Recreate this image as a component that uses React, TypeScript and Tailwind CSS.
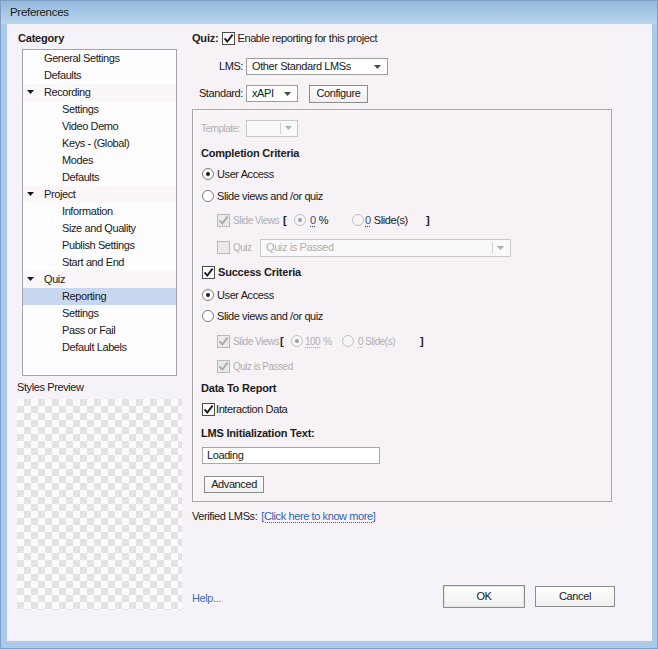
import clsx from "clsx";

type Node = { t: string; l: number; arrow?: boolean; sel?: boolean };

const tree: Node[] = [
  { t: "General Settings", l: 0 },
  { t: "Defaults", l: 0 },
  { t: "Recording", l: 0, arrow: true },
  { t: "Settings", l: 1 },
  { t: "Video Demo", l: 1 },
  { t: "Keys - (Global)", l: 1 },
  { t: "Modes", l: 1 },
  { t: "Defaults", l: 1 },
  { t: "Project", l: 0, arrow: true },
  { t: "Information", l: 1 },
  { t: "Size and Quality", l: 1 },
  { t: "Publish Settings", l: 1 },
  { t: "Start and End", l: 1 },
  { t: "Quiz", l: 0, arrow: true },
  { t: "Reporting", l: 1, sel: true },
  { t: "Settings", l: 1 },
  { t: "Pass or Fail", l: 1 },
  { t: "Default Labels", l: 1 },
];

function Check({ checked, disabled }: { checked?: boolean; disabled?: boolean }) {
  return (
    <span
      className={clsx(
        "w-[13px] h-[13px] shrink-0 border flex items-center justify-center",
        disabled ? "border-[#b9b9b9] bg-[#e9e9ea]" : "border-[#4d4d4d] bg-white"
      )}
    >
      {checked && (
        <svg width="11" height="11" viewBox="0 0 11 11">
          <path
            d="M1.6 5.4 L4.3 8.6 L9.6 1.6"
            fill="none"
            stroke={disabled ? "#a9a9a9" : "#1c1c1c"}
            strokeWidth="1.9"
          />
        </svg>
      )}
    </span>
  );
}

function Radio({ on, disabled }: { on?: boolean; disabled?: boolean }) {
  return (
    <span
      className={clsx(
        "w-[12px] h-[12px] shrink-0 rounded-full border flex items-center justify-center",
        disabled ? "border-[#c2c2c2] bg-[#f6f6f6]" : "border-[#7c7c7c] bg-white"
      )}
    >
      {on && (
        <span className={clsx("w-[4px] h-[4px] rounded-full", disabled ? "bg-[#9c9c9c]" : "bg-[#1e1e1e]")} />
      )}
    </span>
  );
}

function Arrow({ color = "#4a4a4a" }: { color?: string }) {
  return (
    <svg width="7" height="4" viewBox="0 0 7 4">
      <polygon points="0,0 7,0 3.5,4" fill={color} />
    </svg>
  );
}

function Select({ text, className, disabled }: { text: string; className: string; disabled?: boolean }) {
  return (
    <div
      className={clsx(
        "h-[17px] border flex items-center pl-[5px] pr-[6px]",
        disabled ? "border-[#c9c9c9] bg-[#f9f8fa] text-[#b0b0b0]" : "border-[#9d9d9d] bg-white",
        className
      )}
    >
      <span className="flex-1 truncate">{text}</span>
      {disabled && <span className="w-px h-[11px] bg-[#d0d0d0] mr-[4px]" />}
      <Arrow color={disabled ? "#a9a9a9" : "#4a4a4a"} />
    </div>
  );
}

function Btn({ children, className }: { children: string; className: string }) {
  return (
    <div
      className={clsx(
        "border border-[#8c8c8c] bg-linear-to-b from-[#fdfdfd] to-[#f0f0f0] flex items-center justify-center",
        className
      )}
    >
      {children}
    </div>
  );
}

export default function App() {
  return (
    <div className="w-[658px] h-[649px] flex flex-col bg-[#abc9e8] border border-[#7d9fc4] font-['Liberation_Sans',Arial,sans-serif] text-[11px] tracking-[-0.4px] text-[#202020] whitespace-nowrap overflow-hidden">
      <div className="h-[23px] shrink-0 flex items-center pl-[9px] bg-linear-to-b from-[#93b8dc] to-[#bad5ee] text-[11.5px] tracking-[-0.3px] text-[#1b1b1b]">
        Preferences
      </div>

      <div className="flex-1 ml-[6px] mr-[5px] mb-[7px] border border-[#eef2f8] bg-[#f6f2fa] flex pl-[9px]">
        {/* left column */}
        <div className="w-[165px] shrink-0 flex flex-col">
          <div className="mt-[5px] h-[16px] pl-[1px] flex items-center font-bold tracking-[-0.2px]">Category</div>
          <div className="mt-[3px] ml-[5px] w-[155px] h-[327px] border border-[#a3a3a8] bg-[#fdfcfe]">
            {tree.map((n, i) => (
              <div
                key={i}
                className={clsx(
                  "h-[17px] flex items-center pl-[4px] pb-[1px]",
                  n.sel && "bg-[#c6d7ef]",
                  n.arrow && "bg-[#fbf6f7]"
                )}
              >
                <span className="w-[17px] flex items-center">{n.arrow && <Arrow color="#1a1a1a" />}</span>
                <span className={clsx(n.l === 1 && "ml-[18px]")}>{n.t}</span>
              </div>
            ))}
          </div>
          <div className="mt-[3px] h-[16px] flex items-center">Styles Preview</div>
          <div className="mt-[4px] h-[211px] w-[165px] bg-[conic-gradient(#e3e3e3_25%,#fbfbfb_0_50%,#e3e3e3_0_75%,#fbfbfb_0)] bg-[length:14px_14px]" />
        </div>

        {/* right column */}
        <div className="ml-[4px] flex flex-col">
          <div className="mt-[6px] w-[432px] bg-[#f7f2f6] px-[6px] pb-[5px] flex flex-col">
            <div className="h-[14px] flex items-center">
              <span className="font-bold tracking-[-0.2px] mr-[3px]">Quiz:</span>
              <Check checked />
              <span className="ml-[3px]">Enable reporting for this project</span>
            </div>

            <div className="mt-[13px] h-[17px] flex items-center">
              <span className="w-[54px] pr-[3px] text-right">LMS:</span>
              <Select text="Other Standard LMSs" className="w-[142px]" />
            </div>

            <div className="mt-[10px] h-[17px] flex items-center">
              <span className="w-[54px] pr-[3px] text-right">Standard:</span>
              <Select text="xAPI" className="w-[52px]" />
              <Btn className="ml-[11px] w-[59px] h-[18px]">Configure</Btn>
            </div>

            {/* group box */}
            <div className="mt-[7px] w-[420px] h-[393px] border border-[#a8a6ab] shadow-[inset_1px_1px_0_#ffffff] pl-[8px] flex flex-col">
              <div className="mt-[9px] h-[18px] flex items-center text-[#b2b2b2]">
                <span className="w-[45px] text-[10px] tracking-[-0.5px]">Template:</span>
                <div className="w-[52px] h-[17px] border border-[#c9c9c9] bg-[#f9f8fa] flex items-center justify-end pr-[5px]">
                  <span className="w-px h-[11px] bg-[#d0d0d0] mr-[4px]" />
                  <Arrow color="#b0b0b0" />
                </div>
              </div>

              <div className="mt-[8px] h-[17px] flex items-center font-bold tracking-[-0.2px]">Completion Criteria</div>

              <div className="mt-[3px] h-[18px] flex items-center pl-[1px]">
                <Radio on />
                <span className="ml-[3px]">User Access</span>
              </div>
              <div className="mt-[4px] h-[18px] flex items-center pl-[1px]">
                <Radio />
                <span className="ml-[3px]">Slide views and /or quiz</span>
              </div>

              <div className="mt-[6px] h-[18px] flex items-center ml-[16px]">
                <div className="w-[66px] shrink-0 flex items-center">
                  <Check checked disabled />
                  <span className="ml-[3px] text-[#b0b0b0] text-[10px] tracking-[-0.5px]">Slide Views</span>
                </div>
                <span className="w-[11px] font-bold">[</span>
                <div className="w-[58px] flex items-center">
                  <Radio on disabled />
                  <span className="ml-[4px] text-[#2f4f80] underline decoration-dotted underline-offset-2">0</span>
                  <span className="ml-[3px]">%</span>
                </div>
                <div className="w-[74px] flex items-center">
                  <Radio disabled />
                  <span className="ml-[1px] text-[#2f4f80] underline decoration-dotted underline-offset-2">0</span>
                  <span className="ml-[3px]">Slide(s)</span>
                </div>
                <span className="font-bold">]</span>
              </div>

              <div className="mt-[9px] h-[19px] flex items-center ml-[16px]">
                <div className="w-[43px] shrink-0 flex items-center">
                  <Check disabled />
                  <span className="ml-[3px] text-[#b0b0b0] text-[10px] tracking-[-0.5px]">Quiz</span>
                </div>
                <Select text="Quiz is Passed" className="w-[251px] h-[18px]" disabled />
              </div>

              <div className="mt-[6px] h-[18px] flex items-center pl-[1px]">
                <Check checked />
                <span className="ml-[3px] font-bold tracking-[-0.2px]">Success Criteria</span>
              </div>
              <div className="mt-[5px] h-[18px] flex items-center pl-[1px]">
                <Radio on />
                <span className="ml-[3px]">User Access</span>
              </div>
              <div className="mt-[3px] h-[18px] flex items-center pl-[1px]">
                <Radio />
                <span className="ml-[3px]">Slide views and /or quiz</span>
              </div>

              <div className="mt-[7px] h-[18px] flex items-center ml-[16px] text-[#b0b0b0] text-[10px] tracking-[-0.5px]">
                <div className="w-[63px] shrink-0 flex items-center">
                  <Check checked disabled />
                  <span className="ml-[3px]">Slide Views</span>
                </div>
                <span className="w-[11px] font-bold text-[11px] text-[#202020]">[</span>
                <div className="w-[51px] flex items-center">
                  <Radio on disabled />
                  <span className="ml-[2px] underline decoration-dotted underline-offset-2">100</span>
                  <span className="ml-[3px]">%</span>
                </div>
                <div className="w-[78px] flex items-center">
                  <Radio disabled />
                  <span className="ml-[4px] underline decoration-dotted underline-offset-2">0</span>
                  <span className="ml-[2px]">Slide(s)</span>
                </div>
                <span className="font-bold text-[11px] text-[#202020]">]</span>
              </div>

              <div className="mt-[7px] h-[18px] flex items-center ml-[16px]">
                <Check checked disabled />
                <span className="ml-[3px] text-[#b0b0b0] text-[10px] tracking-[-0.5px]">Quiz is Passed</span>
              </div>

              <div className="mt-[4px] h-[18px] flex items-center font-bold tracking-[-0.2px]">Data To Report</div>
              <div className="mt-[3px] h-[18px] flex items-center pl-[1px]">
                <Check checked />
                <span className="ml-[1px]">Interaction Data</span>
              </div>
              <div className="mt-[6px] h-[18px] flex items-center font-bold tracking-[-0.2px]">LMS Initialization Text:</div>

              <div className="mt-[5px] ml-[1px] w-[178px] h-[17px] border border-[#a9a9a9] bg-white flex items-center pl-[4px]">
                Loading
              </div>

              <Btn className="mt-[12px] ml-[3px] w-[60px] h-[17px]">Advanced</Btn>
            </div>

            <div className="mt-[6px] h-[16px] flex items-center">
              <span>Verified LMSs:</span>
              <span className="ml-[4px] text-[#2d66b8] underline decoration-dotted decoration-[#2d66b8] underline-offset-2">
                [Click here to know more]
              </span>
            </div>
          </div>

          <div className="mt-[56px] w-[429px] pl-[6px] h-[23px] flex items-center">
            <span className="pt-[4px] text-[#3a70b8]">Help...</span>
            <div className="ml-auto flex items-center gap-[10px]">
              <Btn className="w-[82px] h-[23px] border-[#5e5e5e] shadow-[inset_0_0_0_1px_#e4e4e4]">OK</Btn>
              <Btn className="w-[80px] h-[21px]">Cancel</Btn>
            </div>
          </div>
        </div>
      </div>
    </div>
  );
}
